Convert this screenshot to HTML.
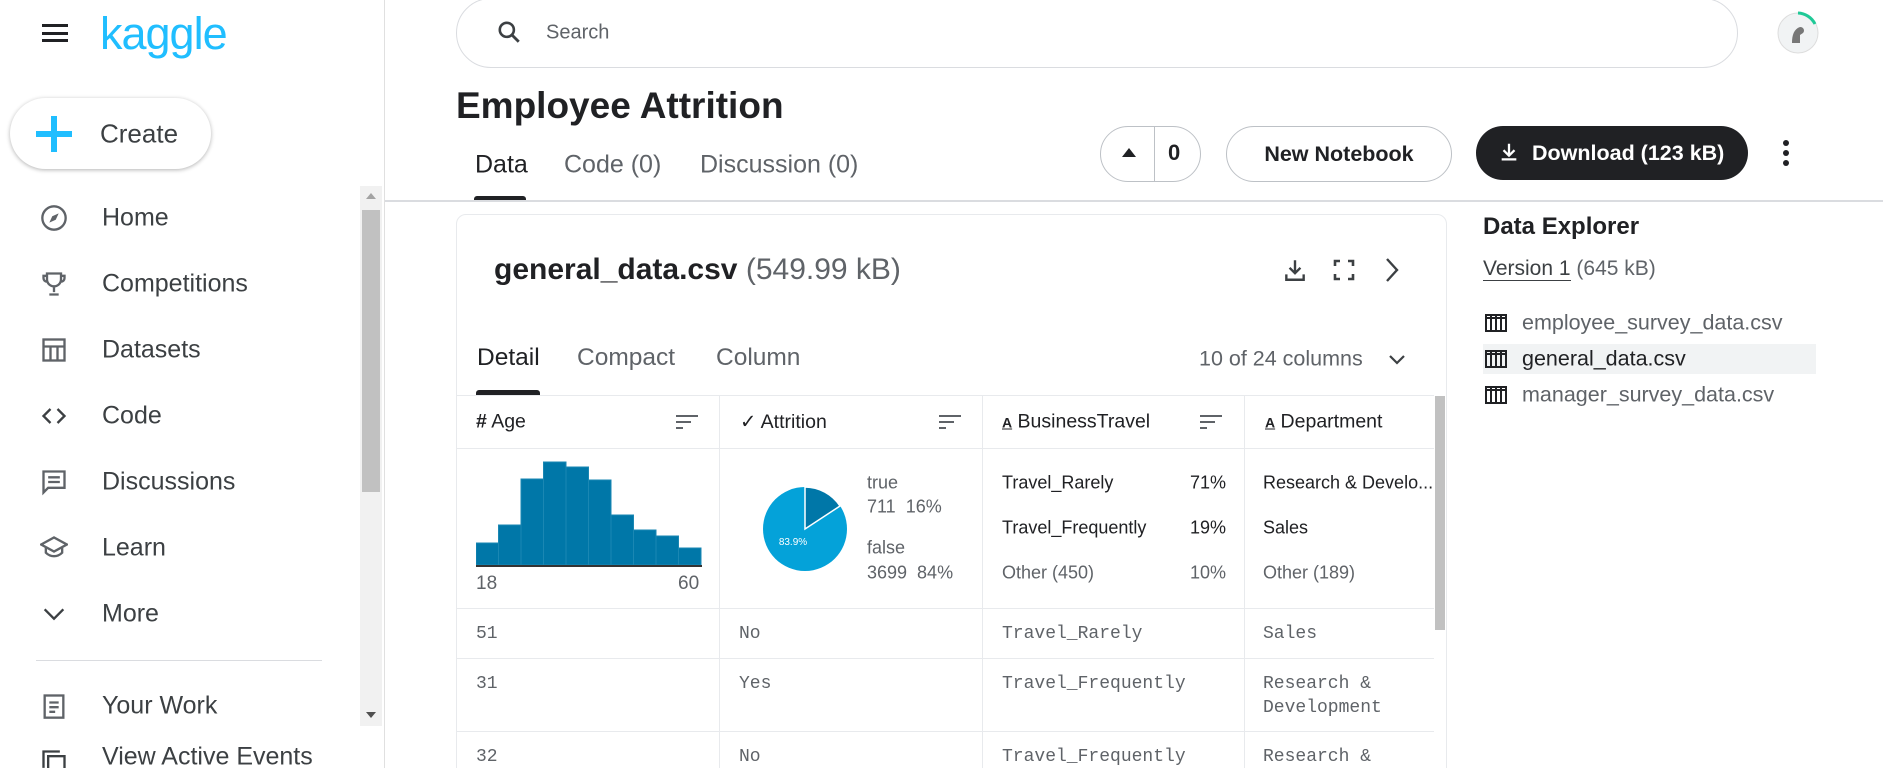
<!DOCTYPE html>
<html><head><meta charset="utf-8"><style>
*{box-sizing:border-box;margin:0;padding:0}
html,body{width:1883px;height:768px;overflow:hidden}
body{background:#fff;font-family:"Liberation Sans",sans-serif;color:#202124;position:relative}
.a{position:absolute;white-space:nowrap}
.nav{position:absolute;left:102px;font-size:25px;color:#3c4043;transform:translateY(-50%)}
.ic{position:absolute;left:40px;transform:translateY(-50%)}
.g{color:#5f6368}
.mono{font-family:"Liberation Mono",monospace;font-size:18px;color:#5f6368}
.vl{position:absolute;width:1px;background:#e8eaed}
.hl{position:absolute;height:1px;background:#e8eaed}
.t{transform:translateY(-50%)}
</style></head><body>
<!-- sidebar -->
<svg class="a" style="left:42px;top:24px" width="26" height="18"><rect y="0" width="26" height="3" fill="#202124"/><rect y="8" width="26" height="3" fill="#202124"/><rect y="15" width="26" height="3" fill="#202124"/></svg>
<div class="a" style="left:100px;top:8px;font-size:45px;color:#20beff;letter-spacing:-1px">kaggle</div>
<div class="a" style="left:10px;top:98px;width:201px;height:71px;border-radius:36px;box-shadow:0 1px 4px rgba(0,0,0,.3);background:#fff"></div>
<svg class="a" style="left:36px;top:116px" width="36" height="36"><rect x="15" y="0" width="6" height="36" fill="#20beff"/><rect x="0" y="15" width="36" height="6" fill="#20beff"/></svg>
<div class="a t" style="left:100px;top:134px;font-size:26px;color:#3c4043">Create</div>

<svg class="ic" style="top:218px" width="28" height="28" viewBox="0 0 24 24"><circle cx="12" cy="12" r="10" fill="none" stroke="#5f6368" stroke-width="2"/><path d="M16 8l-2.5 5.5L8 16l2.5-5.5z" fill="#5f6368"/></svg>
<div class="nav" style="top:218px">Home</div>
<svg class="ic" style="top:284px" width="28" height="28" viewBox="0 0 24 24"><path d="M6 3h12v5a6 6 0 0 1-12 0zM6 5H3v2a3 3 0 0 0 3 3M18 5h3v2a3 3 0 0 1-3 3M12 14v5M8 21h8" fill="none" stroke="#5f6368" stroke-width="2"/></svg>
<div class="nav" style="top:284px">Competitions</div>
<svg class="ic" style="top:350px" width="28" height="28" viewBox="0 0 24 24"><rect x="3" y="3" width="18" height="18" fill="none" stroke="#5f6368" stroke-width="2"/><path d="M3 9h18M9 9v12M15 9v12" stroke="#5f6368" stroke-width="2"/></svg>
<div class="nav" style="top:350px">Datasets</div>
<svg class="ic" style="top:416px" width="28" height="28" viewBox="0 0 24 24"><path d="M9 6l-6 6 6 6M15 6l6 6-6 6" fill="none" stroke="#3c4043" stroke-width="2"/></svg>
<div class="nav" style="top:416px">Code</div>
<svg class="ic" style="top:482px" width="28" height="28" viewBox="0 0 24 24"><path d="M3 3h18v14H7l-4 4z" fill="none" stroke="#5f6368" stroke-width="2"/><path d="M7 8h10M7 12h10" stroke="#5f6368" stroke-width="2"/></svg>
<div class="nav" style="top:482px">Discussions</div>
<svg class="ic" style="top:548px" width="28" height="28" viewBox="0 0 24 24"><path d="M1 9l11-6 11 6-11 6zM5 11v5c4 4 10 4 14 0v-5" fill="none" stroke="#5f6368" stroke-width="2"/></svg>
<div class="nav" style="top:548px">Learn</div>
<svg class="ic" style="top:614px" width="28" height="28" viewBox="0 0 24 24"><path d="M4 8l8 8 8-8" fill="none" stroke="#3c4043" stroke-width="2"/></svg>
<div class="nav" style="top:614px">More</div>
<div class="a" style="left:36px;top:660px;width:286px;height:1px;background:#dadce0"></div>
<svg class="ic" style="top:706px" width="28" height="28" viewBox="0 0 24 24"><rect x="4" y="3" width="16" height="19" fill="none" stroke="#5f6368" stroke-width="2"/><path d="M8 9h8M8 13h8M8 17h5" stroke="#5f6368" stroke-width="2"/></svg>
<div class="nav" style="top:706px">Your Work</div>
<svg class="ic" style="top:762px" width="28" height="28" viewBox="0 0 24 24"><rect x="7" y="7" width="14" height="14" fill="none" stroke="#3c4043" stroke-width="2"/><path d="M3 17V3h14" fill="none" stroke="#3c4043" stroke-width="2"/></svg>
<div class="nav" style="top:757px">View Active Events</div>
<!-- scrollbar -->
<div class="a" style="left:360px;top:186px;width:22px;height:540px;background:#f1f1f1"></div>
<div class="a" style="left:362px;top:210px;width:18px;height:282px;background:#c1c1c1"></div>
<div class="a" style="left:366px;top:193px;border:5px solid transparent;border-bottom:6px solid #a3a3a3;border-top:0"></div>
<div class="a" style="left:366px;top:712px;border:5px solid transparent;border-top:6px solid #505050;border-bottom:0"></div>
<div class="a" style="left:384px;top:0;width:1px;height:768px;background:#e0e0e0"></div>

<!-- header -->
<div class="a" style="left:456px;top:-2px;width:1282px;height:70px;border:1px solid #dadce0;border-radius:35px"></div>
<svg class="a" style="left:496px;top:19px" width="26" height="26" viewBox="0 0 24 24"><circle cx="10" cy="10" r="6.5" fill="none" stroke="#3c4043" stroke-width="2.4"/><path d="M15 15l6 6" stroke="#3c4043" stroke-width="2.6"/></svg>
<div class="a t" style="left:546px;top:33px;font-size:20px;color:#5f6368">Search</div>
<svg class="a" style="left:1774px;top:9px" width="48" height="48"><circle cx="24" cy="24" r="20" fill="#f1f3f4" stroke="#ddd"/><path d="M24 4a20 20 0 0 1 17 11" stroke="#20c997" stroke-width="3" fill="none"/><path d="M18 34c0-8 2-14 8-16 4 0 5 4 3 6l-3 2v8z" fill="#777"/></svg>

<div class="a t" style="left:456px;top:106px;font-size:37px;font-weight:bold">Employee Attrition</div>
<div class="a t" style="left:475px;top:165px;font-size:25px;color:#202124">Data</div>
<div class="a t" style="left:564px;top:165px;font-size:25px;color:#5f6368">Code (0)</div>
<div class="a t" style="left:700px;top:165px;font-size:25px;color:#5f6368">Discussion (0)</div>
<div class="a" style="left:474px;top:196px;width:52px;height:5px;background:#202124;border-radius:3px 3px 0 0"></div>
<div class="a" style="left:385px;top:200px;width:1498px;height:2px;background:#dadce0"></div>

<div class="a" style="left:1100px;top:126px;width:101px;height:56px;border:1px solid #bdc1c6;border-radius:28px"></div>
<div class="a" style="left:1154px;top:126px;width:1px;height:56px;background:#bdc1c6"></div>
<div class="a" style="left:1122px;top:148px;border:7px solid transparent;border-bottom:9px solid #202124;border-top:0"></div>
<div class="a t" style="left:1168px;top:153px;font-size:22px;font-weight:bold">0</div>
<div class="a" style="left:1226px;top:126px;width:226px;height:56px;border:1px solid #bdc1c6;border-radius:28px;font-size:21.5px;font-weight:bold;text-align:center;line-height:54px">New Notebook</div>
<div class="a" style="left:1476px;top:126px;width:272px;height:54px;background:#202124;border-radius:27px;color:#fff;font-size:21.5px;font-weight:bold;line-height:54px;padding-left:56px">Download (123 kB)</div>
<svg class="a" style="left:1498px;top:141px" width="22" height="22" viewBox="0 0 24 24"><path d="M12 3v12M6 10l6 6 6-6M4 20h16" fill="none" stroke="#fff" stroke-width="2.5"/></svg>
<svg class="a" style="left:1780px;top:138px" width="12" height="30"><circle cx="6" cy="5" r="3" fill="#202124"/><circle cx="6" cy="15" r="3" fill="#202124"/><circle cx="6" cy="25" r="3" fill="#202124"/></svg>

<!-- card -->
<div class="a" style="left:456px;top:214px;width:991px;height:570px;border:1px solid #e8eaed;border-radius:10px"></div>
<div class="a t" style="left:494px;top:270px;font-size:30px"><b>general_data.csv</b> <span class="g" style="font-size:30px">(549.99 kB)</span></div>
<svg class="a" style="left:1282px;top:256px" width="26" height="28" viewBox="0 0 24 24"><path d="M12 3v12M7 10l5 5 5-5M4 16v5h16v-5" fill="none" stroke="#3c4043" stroke-width="2.2"/></svg>
<svg class="a" style="left:1332px;top:258px" width="24" height="24" viewBox="0 0 24 24"><path d="M3 8V3h5M16 3h5v5M21 16v5h-5M8 21H3v-5" fill="none" stroke="#3c4043" stroke-width="2.6"/></svg>
<svg class="a" style="left:1382px;top:256px" width="20" height="28" viewBox="0 0 20 28"><path d="M5 3l10 11-10 11" fill="none" stroke="#3c4043" stroke-width="2.4"/></svg>

<div class="a t" style="left:477px;top:358px;font-size:24.5px">Detail</div>
<div class="a t" style="left:577px;top:358px;font-size:24.5px;color:#5f6368">Compact</div>
<div class="a t" style="left:716px;top:358px;font-size:24.5px;color:#5f6368">Column</div>
<div class="a" style="left:476px;top:390px;width:64px;height:5px;background:#202124;border-radius:3px 3px 0 0"></div>
<div class="a t" style="left:1199px;top:359px;font-size:21.5px;color:#5f6368">10 of 24 columns</div>
<svg class="a" style="left:1387px;top:352px" width="20" height="16"><path d="M3 4l7 7 7-7" fill="none" stroke="#3c4043" stroke-width="2.2"/></svg>

<div class="hl" style="left:456px;top:395px;width:978px"></div>
<div class="hl" style="left:456px;top:448px;width:978px"></div>
<div class="hl" style="left:456px;top:608px;width:978px"></div>
<div class="hl" style="left:456px;top:658px;width:978px"></div>
<div class="hl" style="left:456px;top:731px;width:978px"></div>
<div class="vl" style="left:719px;top:395px;height:373px"></div>
<div class="vl" style="left:982px;top:395px;height:373px"></div>
<div class="vl" style="left:1244px;top:395px;height:373px"></div>
<div class="a" style="left:1435px;top:396px;width:10px;height:234px;background:#c1c1c1"></div>

<div class="a t" style="left:476px;top:422px;font-size:19.5px"><b>#</b> Age</div>
<div class="a t" style="left:740px;top:422px;font-size:19.5px">✓ Attrition</div>
<div class="a t" style="left:1002px;top:422px;font-size:19.5px"><u style="font-size:14px;font-weight:bold">A</u> BusinessTravel</div>
<div class="a t" style="left:1265px;top:422px;font-size:19.5px"><u style="font-size:14px;font-weight:bold">A</u> Department</div>
<svg class="a" style="left:676px;top:414px" width="22" height="16"><path d="M0 2h22M0 8h15M0 14h7" stroke="#5f6368" stroke-width="2"/></svg>
<svg class="a" style="left:939px;top:414px" width="22" height="16"><path d="M0 2h22M0 8h15M0 14h7" stroke="#5f6368" stroke-width="2"/></svg>
<svg class="a" style="left:1200px;top:414px" width="22" height="16"><path d="M0 2h22M0 8h15M0 14h7" stroke="#5f6368" stroke-width="2"/></svg>

<svg class="a" style="left:476px;top:460px" width="226" height="108">
<g fill="#0077a8" stroke="#1a87b3" stroke-width="1">
<rect x="0" y="83" width="22.5" height="22"/><rect x="22.5" y="65" width="22.5" height="40"/><rect x="45" y="19" width="22.5" height="86"/><rect x="67.5" y="2" width="22.5" height="103"/><rect x="90" y="7" width="22.5" height="98"/><rect x="112.5" y="20" width="22.5" height="85"/><rect x="135" y="55" width="22.5" height="50"/><rect x="157.5" y="70" width="22.5" height="35"/><rect x="180" y="76" width="22.5" height="29"/><rect x="202.5" y="88" width="22.5" height="17"/></g>
<rect x="0" y="105" width="226" height="2" fill="#333"/></svg>
<div class="a t g" style="left:476px;top:584px;font-size:19px">18</div>
<div class="a t g" style="left:678px;top:584px;font-size:19px">60</div>

<svg class="a" style="left:761px;top:485px" width="88" height="88"><circle cx="44" cy="44" r="42" fill="#04a2d9"/><path d="M44 44V2A42 42 0 0 1 79 21z" fill="#0077a8" stroke="#fff" stroke-width="1.5"/><text x="32" y="60" font-size="10" fill="#fff" font-family="Liberation Sans" text-anchor="middle">83.9%</text></svg>
<div class="a t g" style="left:867px;top:483px;font-size:18px">true</div>
<div class="a t g" style="left:867px;top:507px;font-size:18px">711&nbsp; 16%</div>
<div class="a t g" style="left:867px;top:548px;font-size:18px">false</div>
<div class="a t g" style="left:867px;top:573px;font-size:18px">3699&nbsp; 84%</div>

<div class="a t" style="left:1002px;top:483px;font-size:18px">Travel_Rarely</div>
<div class="a t" style="left:1002px;top:528px;font-size:18px">Travel_Frequently</div>
<div class="a t g" style="left:1002px;top:573px;font-size:18px">Other (450)</div>
<div class="a t" style="left:1190px;top:483px;font-size:18px">71%</div>
<div class="a t" style="left:1190px;top:528px;font-size:18px">19%</div>
<div class="a t g" style="left:1190px;top:573px;font-size:18px">10%</div>
<div class="a t" style="left:1263px;top:483px;font-size:18px">Research &amp; Develo...</div>
<div class="a t" style="left:1263px;top:528px;font-size:18px">Sales</div>
<div class="a t g" style="left:1263px;top:573px;font-size:18px">Other (189)</div>

<div class="a t mono" style="left:476px;top:634px">51</div>
<div class="a t mono" style="left:739px;top:634px">No</div>
<div class="a t mono" style="left:1002px;top:634px">Travel_Rarely</div>
<div class="a t mono" style="left:1263px;top:634px">Sales</div>
<div class="a t mono" style="left:476px;top:684px">31</div>
<div class="a t mono" style="left:739px;top:684px">Yes</div>
<div class="a t mono" style="left:1002px;top:684px">Travel_Frequently</div>
<div class="a t mono" style="left:1263px;top:684px">Research &amp;</div>
<div class="a t mono" style="left:1263px;top:708px">Development</div>
<div class="a t mono" style="left:476px;top:757px">32</div>
<div class="a t mono" style="left:739px;top:757px">No</div>
<div class="a t mono" style="left:1002px;top:757px">Travel_Frequently</div>
<div class="a t mono" style="left:1263px;top:757px">Research &amp;</div>

<!-- data explorer -->
<div class="a t" style="left:1483px;top:227px;font-size:24px;font-weight:bold">Data Explorer</div>
<div class="a t g" style="left:1483px;top:269px;font-size:21px"><span style="color:#3c4043;border-bottom:1px solid #3c4043">Version 1</span> (645 kB)</div>
<div class="a" style="left:1483px;top:344px;width:333px;height:30px;background:#f1f3f4"></div>
<svg class="a" style="left:1485px;top:314px" width="22" height="18" viewBox="0 0 22 18"><rect x="1" y="1" width="20" height="16" fill="none" stroke="#202124" stroke-width="2"/><path d="M1 4h20M6 1v16M11 1v16M16 1v16" stroke="#202124" stroke-width="2"/></svg>
<svg class="a" style="left:1485px;top:350px" width="22" height="18" viewBox="0 0 22 18"><rect x="1" y="1" width="20" height="16" fill="none" stroke="#202124" stroke-width="2"/><path d="M1 4h20M6 1v16M11 1v16M16 1v16" stroke="#202124" stroke-width="2"/></svg>
<svg class="a" style="left:1485px;top:386px" width="22" height="18" viewBox="0 0 22 18"><rect x="1" y="1" width="20" height="16" fill="none" stroke="#202124" stroke-width="2"/><path d="M1 4h20M6 1v16M11 1v16M16 1v16" stroke="#202124" stroke-width="2"/></svg>
<div class="a t g" style="left:1522px;top:323px;font-size:21.5px">employee_survey_data.csv</div>
<div class="a t" style="left:1522px;top:359px;font-size:21.5px">general_data.csv</div>
<div class="a t g" style="left:1522px;top:395px;font-size:21.5px">manager_survey_data.csv</div>
</body></html>
